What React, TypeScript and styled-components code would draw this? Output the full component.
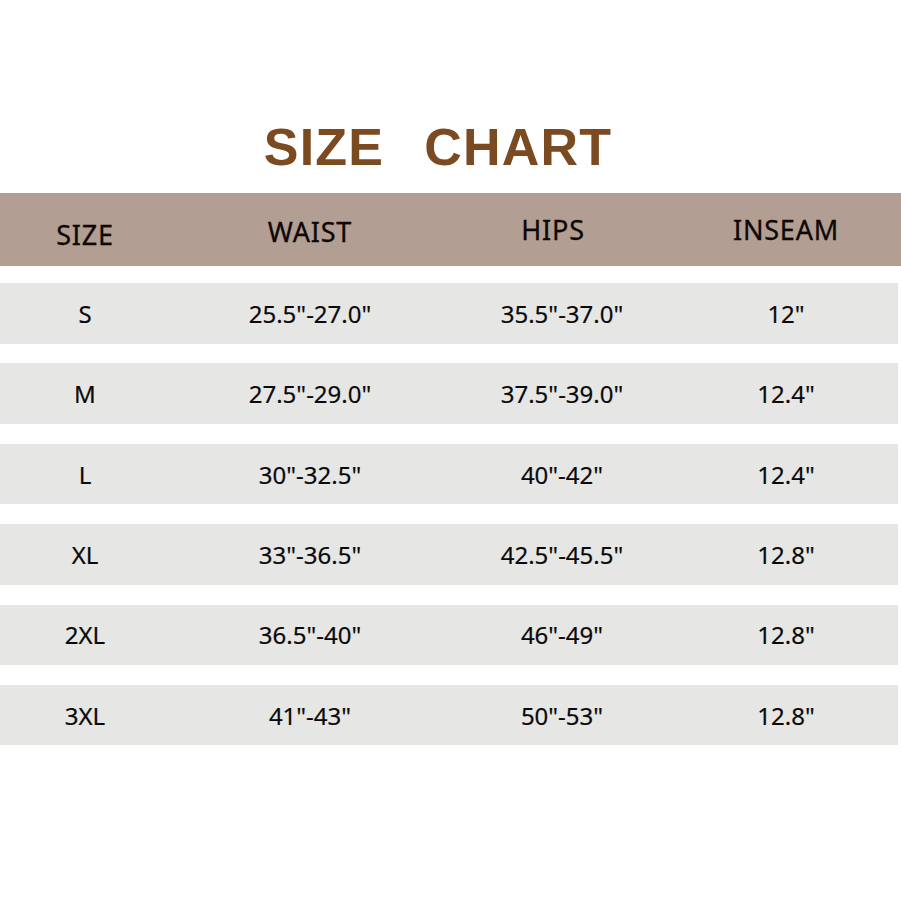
import React from "react";
import styled, { createGlobalStyle } from "styled-components";

const rows = [
  ["S", '25.5"-27.0"', '35.5"-37.0"', '12"'],
  ["M", '27.5"-29.0"', '37.5"-39.0"', '12.4"'],
  ["L", '30"-32.5"', '40"-42"', '12.4"'],
  ["XL", '33"-36.5"', '42.5"-45.5"', '12.8"'],
  ["2XL", '36.5"-40"', '46"-49"', '12.8"'],
  ["3XL", '41"-43"', '50"-53"', '12.8"'],
];

// header labels sit a little off the column centres in the picture
const heads = [
  { label: "SIZE", dx: 0, dy: 5 },
  { label: "WAIST", dx: 0, dy: 2 },
  { label: "HIPS", dx: -9, dy: 0 },
  { label: "INSEAM", dx: 0, dy: 0 },
];

export default function App() {
  return (
    <Page>
      <Global />
      <Title>
        <span>SIZE</span>
        <span>CHART</span>
      </Title>
      <HeaderBar>
        {heads.map(h => (
          <HeadCell key={h.label} $dx={h.dx} $dy={h.dy}>
            {h.label}
          </HeadCell>
        ))}
      </HeaderBar>
      <Rows>
        {rows.map(r => (
          <Row key={r[0]}>
            {r.map((v, i) => (
              <Cell key={i}>{v}</Cell>
            ))}
          </Row>
        ))}
      </Rows>
    </Page>
  );
}

const Global = createGlobalStyle`
  html, body {
    margin: 0;
    padding: 0;
    background: #fff;
  }
`;

const Page = styled.div`
  width: 901px;
  height: 900px;
  background: #fff;
  overflow: hidden;
`;

const Title = styled.h1`
  margin: 0 0 20px;
  padding: 121px 25px 0 0;
  height: 52px;
  display: flex;
  justify-content: center;
  gap: 40px;
  font-family: "Liberation Sans", Arial, sans-serif;
  font-weight: 700;
  font-size: 52px;
  line-height: 52px;
  letter-spacing: 1.2px;
  color: #7b4a20;
`;

const cols = "170px 280px 224px 224px";

const HeaderBar = styled.div`
  display: grid;
  grid-template-columns: ${cols};
  height: 73px;
  background: #b29e92;
`;

const HeadCell = styled.div<{ $dx: number; $dy: number }>`
  display: flex;
  align-items: center;
  justify-content: center;
  font-family: "Noto Sans", "Open Sans", sans-serif;
  font-size: 27px;
  letter-spacing: 0.8px;
  color: #0e0704;
  -webkit-text-stroke: 0.3px #0e0704;
  transform: translate(${p => p.$dx}px, ${p => p.$dy}px);
`;

const Rows = styled.div`
  display: flex;
  flex-direction: column;
  gap: 19.9px;
  padding-top: 17px;
`;

const Row = styled.div`
  display: grid;
  grid-template-columns: ${cols};
  height: 60.5px;
  width: 898px;
  background: #e6e6e5;
`;

const Cell = styled.div`
  display: flex;
  align-items: center;
  justify-content: center;
  font-family: "Noto Sans", "Open Sans", sans-serif;
  font-size: 24px;
  color: #0a0a0a;
  -webkit-text-stroke: 0.2px #0a0a0a;
`;
